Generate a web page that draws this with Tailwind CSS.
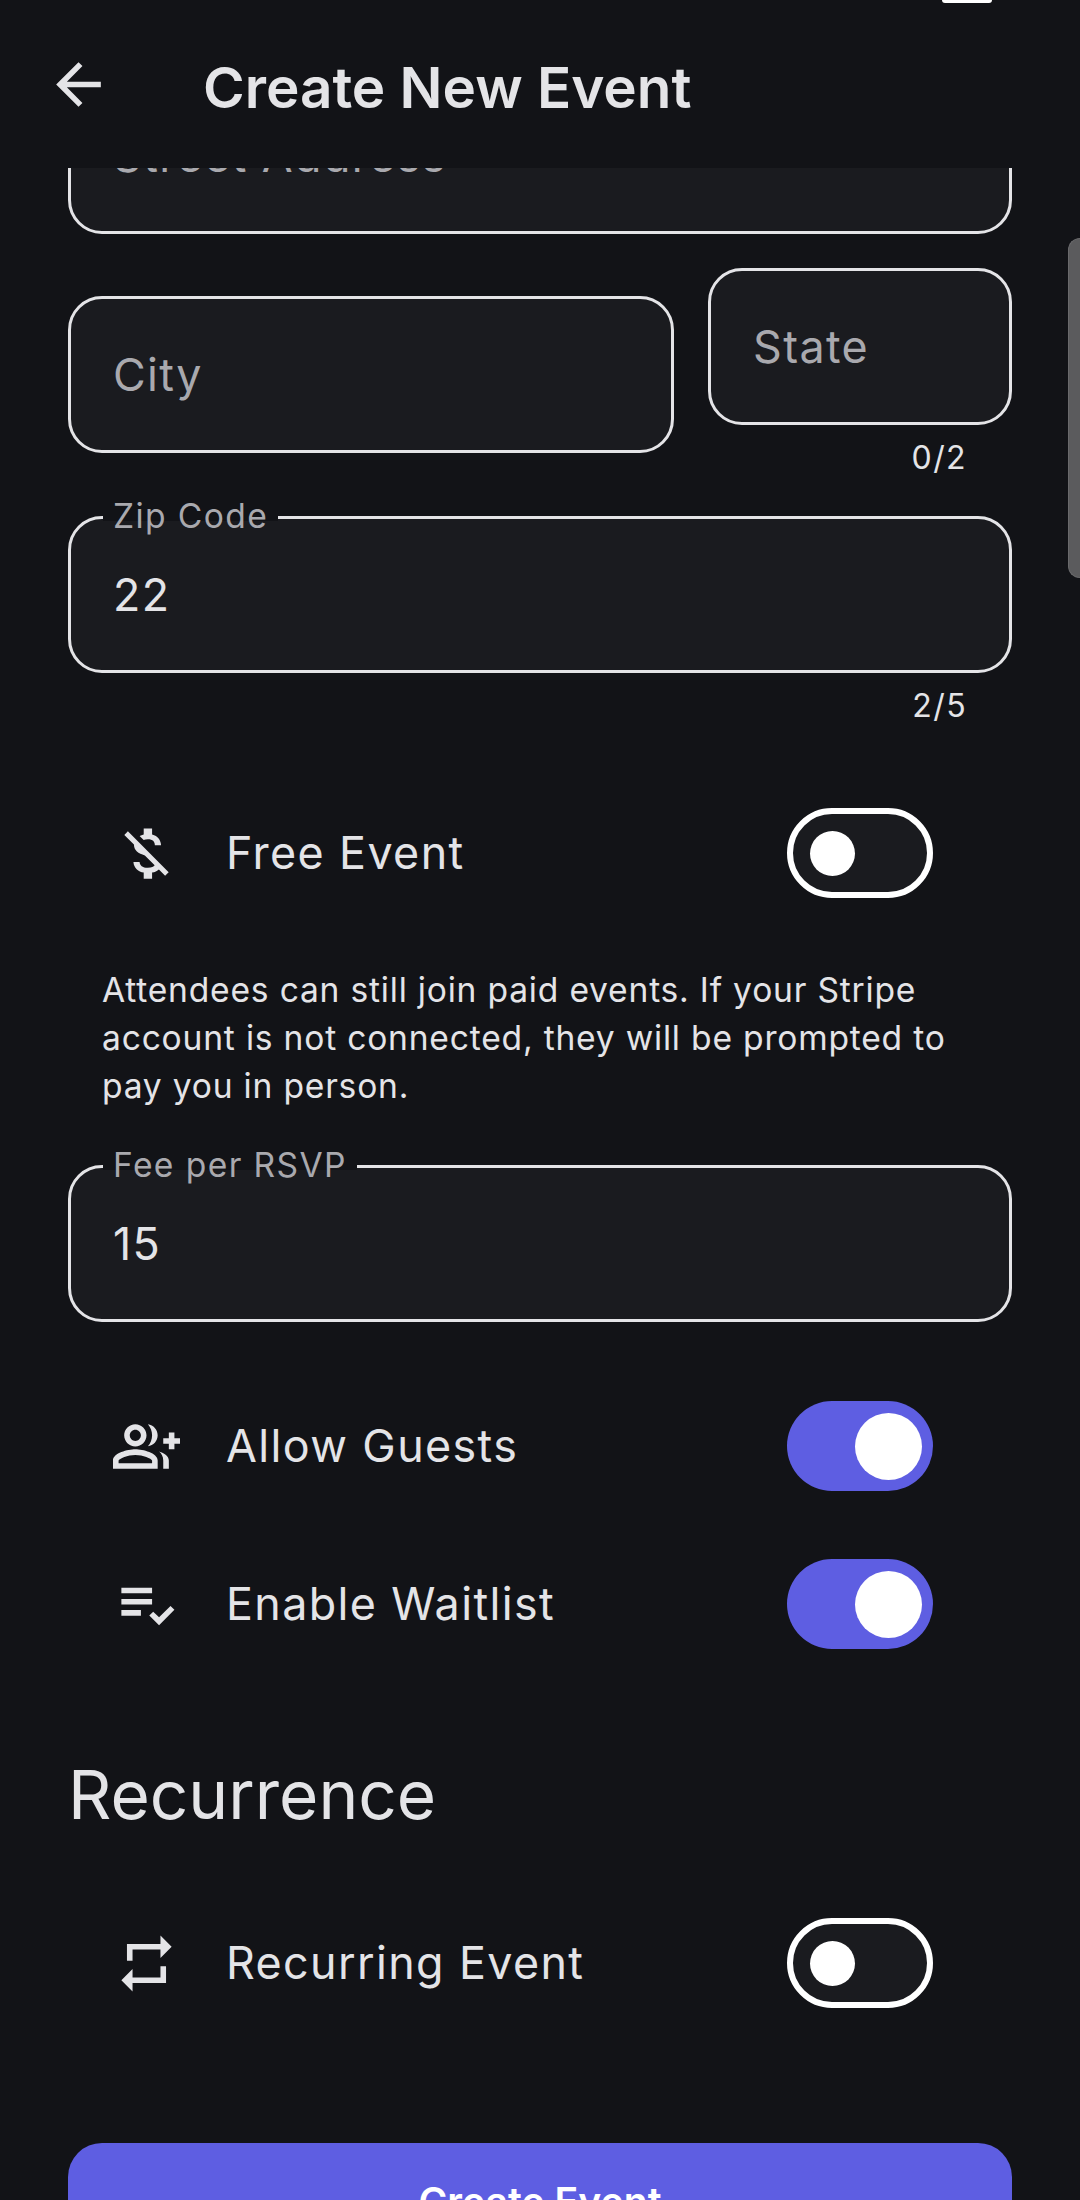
<!DOCTYPE html>
<html>
<head>
<meta charset="utf-8">
<script src="https://cdn.jsdelivr.net/npm/@tailwindcss/browser@4"></script>
</head>
<body class="bg-[#121317]">
<div class="relative w-[1080px] h-[2200px] overflow-hidden bg-[#121317] text-[#e4e4e7] font-['Inter',sans-serif]">
  <header class="relative z-10 h-[168px] bg-[#121317] flex items-center">
    <div class="absolute top-0 left-[942px] w-[50px] h-[3px] bg-white rounded-b-[3px]"></div>
    <svg class="ml-[45px] w-[67px] h-[67px]" viewBox="0 0 24 24" fill="#e4e4e7"><path d="M20 11H7.83l5.59-5.59L12 4l-8 8 8 8 1.41-1.41L7.83 13H20v-2z"/></svg>
    <h1 class="ml-[91px] pt-[9px] text-[56.6px] leading-none font-semibold">Create New Event</h1>
  </header>

  <main class="-mt-[91px] px-[68px]">
    <div class="h-[157px] rounded-[34px] border-[3px] border-[#e4e4e7] bg-[#1a1b1f] flex items-center pl-[42px] pt-[2px] text-[44.8px] tracking-[1.4px] text-[#a9a9ae]">Street Address</div>

    <div class="mt-[34px] flex items-center gap-[34px]">
      <div class="w-[606px] h-[157px] rounded-[34px] border-[3px] border-[#e4e4e7] bg-[#1a1b1f] flex items-center pl-[42px] pt-[2px] text-[44.8px] tracking-[1.4px] text-[#a9a9ae]">City</div>
      <div class="w-[304px]">
        <div class="h-[157px] rounded-[34px] border-[3px] border-[#e4e4e7] bg-[#1a1b1f] flex items-center pl-[42px] pt-[2px] text-[44.8px] tracking-[1.4px] text-[#a9a9ae]">State</div>
        <div class="h-[56px] pt-[10px] pr-[45px] flex items-center justify-end text-[32px] tracking-[1.4px]">0/2</div>
      </div>
    </div>

    <div class="mt-[35px] relative h-[157px] rounded-[34px] border-[3px] border-[#e4e4e7] bg-[#1a1b1f] flex items-center pl-[42px] pt-[2px] text-[44.8px] tracking-[1.4px]">
      22
      <span class="absolute left-[32px] -top-[23px] h-[40px] px-[10px] flex items-center text-[33.6px] leading-none tracking-[1.4px] text-[#a9a9ae] bg-[linear-gradient(#121317_62%,transparent_62%)]">Zip Code</span>
    </div>
    <div class="h-[56px] pt-[10px] pr-[45px] flex items-center justify-end text-[32px] tracking-[1.4px]">2/5</div>

    <div class="mt-[79px] h-[90px] flex items-center pl-[45px] pr-[79px]">
      <svg class="w-[67px] h-[67px] shrink-0" viewBox="0 0 24 24" fill="#e4e4e7"><path d="M12.5 6.9c1.78 0 2.44.85 2.5 2.1h2.21c-.07-1.72-1.12-3.3-3.21-3.81V3h-3v2.16c-.53.12-1.03.3-1.48.54l1.47 1.47c.41-.17.91-.27 1.51-.27zM5.33 4.06L4.06 5.33 7.5 8.77c0 2.08 1.56 3.21 3.91 3.91l3.51 3.51c-.34.48-1.05.91-2.42.91-2.06 0-2.87-.92-2.98-2.1h-2.2c.12 2.19 1.76 3.42 3.68 3.83V21h3v-2.15c.96-.18 1.82-.55 2.45-1.12l2.22 2.22 1.27-1.27L5.33 4.06z"/></svg>
      <span class="ml-[46px] pt-[2px] text-[44.8px] tracking-[1.4px]">Free Event</span>
      <div class="ml-auto w-[146px] h-[90px] rounded-full border-[6px] border-white bg-[#1a1b1f] flex items-center pl-[17px]"><div class="w-[45px] h-[45px] rounded-full bg-white"></div></div>
    </div>

    <p class="mt-[68px] ml-[34px] w-[880px] text-[33.6px] leading-[48px] tracking-[0.8px]">Attendees can still join paid events. If your Stripe account is not connected, they will be prompted to pay you in person.</p>

    <div class="mt-[55px] relative h-[157px] rounded-[34px] border-[3px] border-[#e4e4e7] bg-[#1a1b1f] flex items-center pl-[42px] pt-[2px] text-[44.8px] tracking-[1.4px]">
      15
      <span class="absolute left-[32px] -top-[23px] h-[40px] px-[10px] flex items-center text-[33.6px] leading-none tracking-[1.4px] text-[#a9a9ae] bg-[linear-gradient(#121317_62%,transparent_62%)]">Fee per RSVP</span>
    </div>

    <div class="mt-[79px] h-[90px] flex items-center pl-[45px] pr-[79px]">
      <svg class="w-[67px] h-[67px] shrink-0" viewBox="0 0 24 24" fill="#e4e4e7"><path d="M22 9V7h-2v2h-2v2h2v2h2v-2h2V9h-2zM8 12c2.21 0 4-1.79 4-4s-1.79-4-4-4-4 1.79-4 4 1.79 4 4 4zm0-6c1.1 0 2 .9 2 2s-.9 2-2 2-2-.9-2-2 .9-2 2-2zm0 7c-2.67 0-8 1.34-8 4v3h16v-3c0-2.66-5.33-4-8-4zm6 5H2v-.99c.2-.72 3.3-2.01 6-2.01s5.8 1.29 6 2v1zM12.51 4.05C13.43 5.11 14 6.49 14 8s-.57 2.89-1.49 3.95C14.47 11.7 16 10.04 16 8s-1.53-3.7-3.49-3.95zM16.53 13.83c.89.83 1.47 1.87 1.47 3.17v3h2v-3c0-1.45-1.59-2.51-3.47-3.17z"/></svg>
      <span class="ml-[46px] pt-[2px] text-[44.8px] tracking-[1.4px]">Allow Guests</span>
      <div class="ml-auto w-[146px] h-[90px] rounded-full bg-[#5e5ee2] flex items-center justify-end pr-[11px]"><div class="w-[67px] h-[67px] rounded-full bg-white"></div></div>
    </div>

    <div class="mt-[68px] h-[90px] flex items-center pl-[45px] pr-[79px]">
      <svg class="w-[67px] h-[67px] shrink-0" viewBox="0 0 24 24" fill="#e4e4e7"><path d="M14 10H3v2h11v-2zm0-4H3v2h11V6zM3 16h7v-2H3v2z"/><path d="M14.4 14.6 16.5 16.6 20.6 12.5 22 13.9 16.5 19.4 13 15.9z"/></svg>
      <span class="ml-[46px] pt-[2px] text-[44.8px] tracking-[1.4px]">Enable Waitlist</span>
      <div class="ml-auto w-[146px] h-[90px] rounded-full bg-[#5e5ee2] flex items-center justify-end pr-[11px]"><div class="w-[67px] h-[67px] rounded-full bg-white"></div></div>
    </div>

    <h2 class="mt-[106px] mb-[2px] h-[80px] flex items-center text-[67.5px] leading-none font-normal">Recurrence</h2>

    <div class="mt-[83px] h-[90px] flex items-center pl-[45px] pr-[79px]">
      <svg class="w-[67px] h-[67px] shrink-0" viewBox="0 0 24 24" fill="#e4e4e7"><path d="M7 7h10v3l4-4-4-4v3H5v6h2V7zm10 10H7v-3l-4 4 4 4v-3h12v-6h-2v4z"/></svg>
      <span class="ml-[46px] pt-[2px] text-[44.8px] tracking-[1.4px]">Recurring Event</span>
      <div class="ml-auto w-[146px] h-[90px] rounded-full border-[6px] border-white bg-[#1a1b1f] flex items-center pl-[17px]"><div class="w-[45px] h-[45px] rounded-full bg-white"></div></div>
    </div>

    <button class="mt-[135px] w-full h-[118px] rounded-[34px] bg-[#5e5ee2] text-white text-[39.2px] font-semibold">Create Event</button>
  </main>

  <div class="absolute top-[238px] right-0 w-[12px] h-[340px] rounded-l-[12px] bg-[#5b5b5d] border-l border-y border-[#6a6a6c]"></div>
</div>
</body>
</html>
